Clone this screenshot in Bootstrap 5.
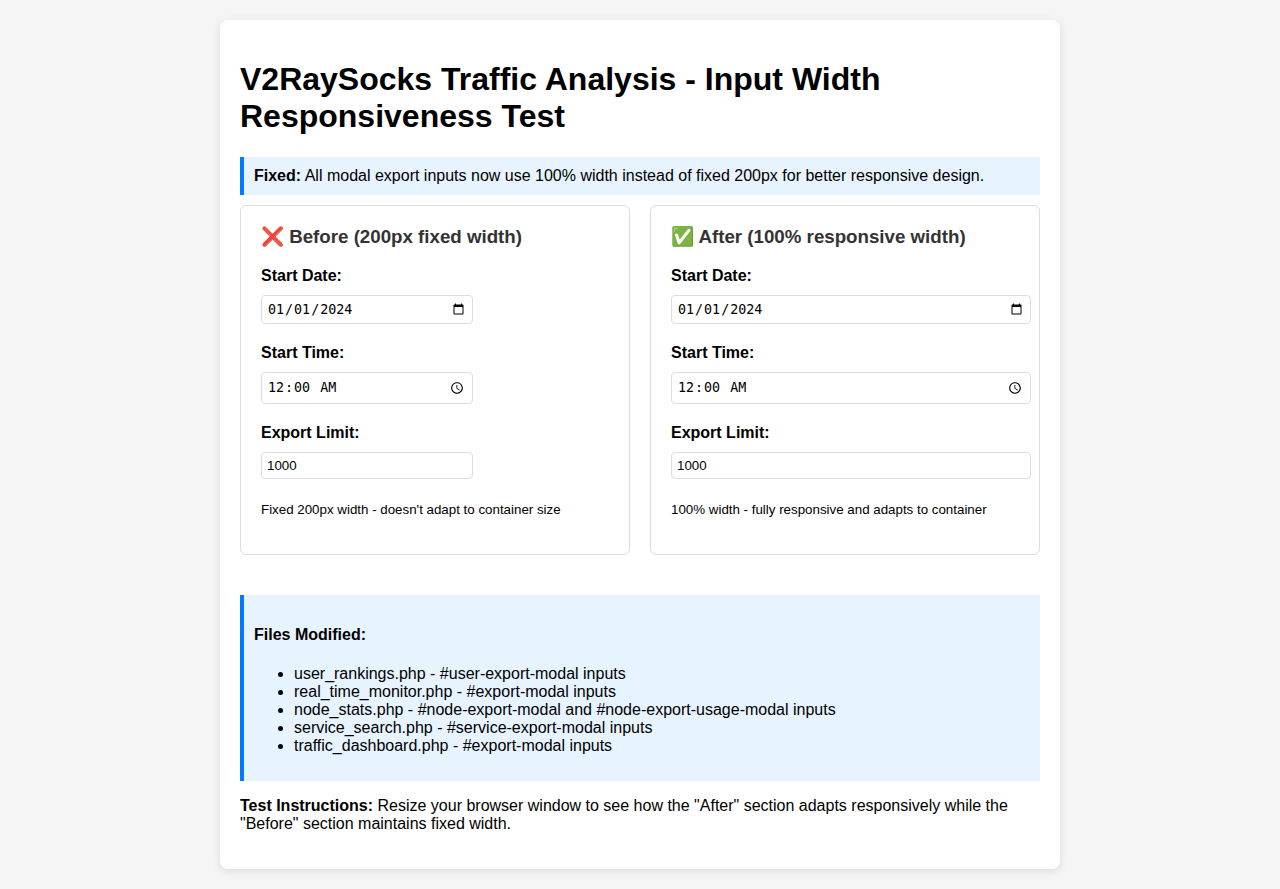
<!DOCTYPE html>
<html lang="en">
<head>
<meta charset="utf-8">
<meta name="viewport" content="width=device-width, initial-scale=1">
<title>Input Width Responsiveness Test</title>
<link href="https://cdn.jsdelivr.net/npm/bootstrap@5.3.0/dist/css/bootstrap.min.css" rel="stylesheet">
<script src="https://cdn.jsdelivr.net/npm/bootstrap@5.3.0/dist/js/bootstrap.bundle.min.js" defer></script>
<style>
body { font-family: Arial, "Liberation Sans", sans-serif; font-size: 16px; line-height: normal; color: #000; background: #f5f5f5; padding: 20px; }
.page-box { max-width: 840px; padding: 20px; border-radius: 8px; box-shadow: 0 2px 10px rgba(0,0,0,.1); }
h1 { font-size: 32px; font-weight: 700; line-height: normal; margin: 21px 0 22px; }
strong { font-weight: 700; }
.callout { background: #e7f3ff; border-left: 4px solid #007bff; padding: 10px; }
.compare { gap: 20px; margin: 10px 0 40px; }
.panel { flex: 1 1 0; min-width: 0; height: 350px; padding: 20px; border: 1px solid #ddd; border-radius: 6px; }
.panel h3 { font-size: 18.72px; font-weight: 700; line-height: 21px; color: #333; margin: 0 0 20px; }
.field { margin-bottom: 20px; }
.field label { display: block; font-weight: 700; line-height: 18px; margin-bottom: 10px; }
.field input { box-sizing: content-box; display: block; padding: 5px; border: 1px solid #ddd; border-radius: 4px; font: 13.3333px Arial, "Liberation Sans", sans-serif; color: #000; background: #fff; }
.field input[type=date], .field input[type=time] { font-family: "DejaVu Sans Mono", monospace; }
.field input::-webkit-datetime-edit-month-field,
.field input::-webkit-datetime-edit-day-field,
.field input::-webkit-datetime-edit-year-field,
.field input::-webkit-datetime-edit-hour-field,
.field input::-webkit-datetime-edit-minute-field { padding: 1px; }
.field input[type=time]::-webkit-datetime-edit { position: relative; top: -1px; }
.fixed input { width: 200px; }
.fluid input { width: 100%; }
.note { font-size: 13.3333px; line-height: 18px; margin-top: 22px; }
h4 { font-size: 16px; font-weight: 700; line-height: 18px; margin: 21px 0; }
ul { padding-left: 40px; margin: 0 0 16px; }
</style>
</head>
<body>
<main class="page-box bg-white mx-auto">
  <h1>V2RaySocks Traffic Analysis - Input Width Responsiveness Test</h1>
  <div class="callout"><strong>Fixed:</strong> All modal export inputs now use 100% width instead of fixed 200px for better responsive design.</div>
  <div class="compare d-flex">
    <section class="panel fixed">
      <h3>❌ Before (200px fixed width)</h3>
      <div class="field"><label for="d1">Start Date:</label><input id="d1" type="date" value="2024-01-01"></div>
      <div class="field"><label for="t1">Start Time:</label><input id="t1" type="time" value="00:00"></div>
      <div class="field"><label for="n1">Export Limit:</label><input id="n1" type="number" value="1000"></div>
      <div class="note">Fixed 200px width - doesn't adapt to container size</div>
    </section>
    <section class="panel fluid">
      <h3>✅ After (100% responsive width)</h3>
      <div class="field"><label for="d2">Start Date:</label><input id="d2" type="date" value="2024-01-01"></div>
      <div class="field"><label for="t2">Start Time:</label><input id="t2" type="time" value="00:00"></div>
      <div class="field"><label for="n2">Export Limit:</label><input id="n2" type="number" value="1000"></div>
      <div class="note">100% width - fully responsive and adapts to container</div>
    </section>
  </div>
  <div class="callout">
    <h4>Files Modified:</h4>
    <ul>
      <li>user_rankings.php - #user-export-modal inputs</li>
      <li>real_time_monitor.php - #export-modal inputs</li>
      <li>node_stats.php - #node-export-modal and #node-export-usage-modal inputs</li>
      <li>service_search.php - #service-export-modal inputs</li>
      <li>traffic_dashboard.php - #export-modal inputs</li>
    </ul>
  </div>
  <p class="my-3"><strong>Test Instructions:</strong> Resize your browser window to see how the "After" section adapts responsively while the "Before" section maintains fixed width.</p>
</main>
</body>
</html>
